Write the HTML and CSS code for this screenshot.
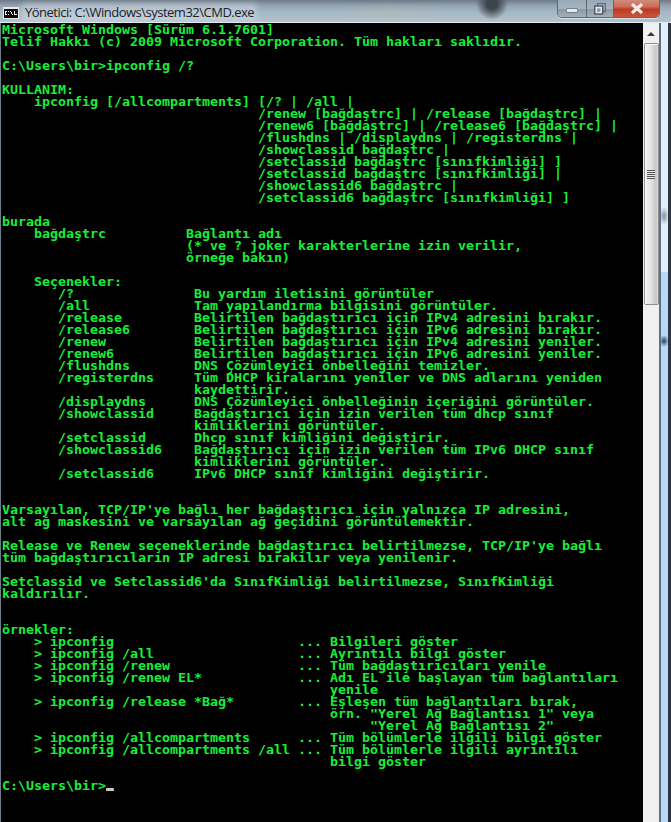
FILE: index.html
```html
<!DOCTYPE html>
<html lang="tr">
<head>
<meta charset="utf-8">
<title>CMD</title>
<link rel="stylesheet" href="styles.css">
</head>
<body>
<div class="window">
  <header class="titlebar">
    <svg class="appicon" width="16" height="12" viewBox="0 0 16 12"><rect width="16" height="12" fill="#e8e8e8"/><rect x="1" y="2" width="14" height="9" fill="#0a0a0a"/><path d="M2 4h2v1H3v2h1v1H2zM5 4h1v1H5zM5 7h1v1H5zM7 4h1v1h1v2h1v1H9V7H8V5H7zM11 4h1v3h2v1h-3z" fill="#f2f2f2"/></svg>
    <span class="title">Yönetici: C:\Windows\system32\CMD.exe</span>
    <div class="controls">
      <div class="btn min"><span class="dash"></span></div>
      <div class="btn max"><svg width="12" height="12" viewBox="0 0 12 12"><rect x="3.5" y="0.5" width="8" height="8" fill="none" stroke="#5f6d78" stroke-width="1.4"/><rect x="0.7" y="3" width="8" height="8" fill="#dfe5ea" stroke="#4e5a64" stroke-width="1.4"/><rect x="3" y="5.4" width="3.4" height="3.4" fill="#8d9aa5"/></svg></div>
      <div class="btn close"><svg width="16" height="11" viewBox="0 0 16 11"><path d="M3 1l10 9M13 1L3 10" stroke="#f1ece8" stroke-width="3.2"/></svg></div>
    </div>
  </header>
  <main class="content">
    <div class="console"><pre class="lines">Microsoft Windows [Sürüm 6.1.7601]
Telif Hakkı (c) 2009 Microsoft Corporation. Tüm hakları saklıdır.

C:\Users\bir&gt;ipconfig /?

KULLANIM:
    ipconfig [/allcompartments] [/? | /all |
                                /renew [bağdaştrc] | /release [bağdaştrc] |
                                /renew6 [bağdaştrc] | /release6 [bağdaştrc] |
                                /flushdns | /displaydns | /registerdns |
                                /showclassid bağdaştrc |
                                /setclassid bağdaştrc [sınıfkimliği] ]
                                /setclassid bağdaştrc [sınıfkimliği] |
                                /showclassid6 bağdaştrc |
                                /setclassid6 bağdaştrc [sınıfkimliği] ]

burada
    bağdaştrc          Bağlantı adı
                       (* ve ? joker karakterlerine izin verilir,
                       örneğe bakın)

    Seçenekler:
       /?               Bu yardım iletisini görüntüler
       /all             Tam yapılandırma bilgisini görüntüler.
       /release         Belirtilen bağdaştırıcı için IPv4 adresini bırakır.
       /release6        Belirtilen bağdaştırıcı için IPv6 adresini bırakır.
       /renew           Belirtilen bağdaştırıcı için IPv4 adresini yeniler.
       /renew6          Belirtilen bağdaştırıcı için IPv6 adresini yeniler.
       /flushdns        DNS Çözümleyici önbelleğini temizler.
       /registerdns     Tüm DHCP kiralarını yeniler ve DNS adlarını yeniden
                        kaydettirir.
       /displaydns      DNS Çözümleyici önbelleğinin içeriğini görüntüler.
       /showclassid     Bağdaştırıcı için izin verilen tüm dhcp sınıf
                        kimliklerini görüntüler.
       /setclassid      Dhcp sınıf kimliğini değiştirir.
       /showclassid6    Bağdaştırıcı için izin verilen tüm IPv6 DHCP sınıf
                        kimliklerini görüntüler.
       /setclassid6     IPv6 DHCP sınıf kimliğini değiştirir.


Varsayılan, TCP/IP'ye bağlı her bağdaştırıcı için yalnızca IP adresini,
alt ağ maskesini ve varsayılan ağ geçidini görüntülemektir.

Release ve Renew seçeneklerinde bağdaştırıcı belirtilmezse, TCP/IP'ye bağlı
tüm bağdaştırıcıların IP adresi bırakılır veya yenilenir.

Setclassid ve Setclassid6'da SınıfKimliği belirtilmezse, SınıfKimliği
kaldırılır.


örnekler:
    &gt; ipconfig                       ... Bilgileri göster
    &gt; ipconfig /all                  ... Ayrıntılı bilgi göster
    &gt; ipconfig /renew                ... Tüm bağdaştırıcıları yenile
    &gt; ipconfig /renew EL*            ... Adı EL ile başlayan tüm bağlantıları
                                         yenile
    &gt; ipconfig /release *Bağ*        ... Eşleşen tüm bağlantıları bırak,
                                         örn. "Yerel Ağ Bağlantısı 1" veya
                                              "Yerel Ağ Bağlantısı 2"
    &gt; ipconfig /allcompartments      ... Tüm bölümlerle ilgili bilgi göster
    &gt; ipconfig /allcompartments /all ... Tüm bölümlerle ilgili ayrıntılı
                                         bilgi göster

C:\Users\bir&gt;<span class="cursor"></span></pre></div>
    <aside class="scrollbar">
      <div class="arrow"></div>
      <div class="thumb"><span class="grip"></span></div>
    </aside>
    <div class="frame"></div>
  </main>
</div>
</body>
</html>
```
FILE: styles.css
```css
* { box-sizing: border-box; }
html, body { margin: 0; padding: 0; height: 100%; background: #000; overflow: hidden; }
.window {
  width: 671px;
  height: 822px;
  display: flex;
  flex-direction: column;
  background: #000;
}
.titlebar {
  height: 23px;
  flex: none;
  display: flex;
  align-items: center;
  padding-left: 3px;
  background:
    radial-gradient(circle at 492px 4px, #3c444c 0, #3c444c 5px, rgba(60,68,76,0) 16px),
    radial-gradient(ellipse 60px 12px at 390px 15px, rgba(180,190,170,.4), rgba(180,190,170,0)),
    linear-gradient(to bottom, #6f7a85 0, #94a6b5 6px, #a5b6c4 12px, #b3c3d0 22px);
  box-shadow: inset 0 -1px 0 #e4ebf0;
}
.appicon { flex: none; margin-right: 6px; margin-top: 2px; }
.title {
  font: 13px/1 "Open Sans", "Noto Sans", sans-serif;
  letter-spacing: -0.5px;
  color: #1b2126;
  background: rgba(215,225,232,.45);
  box-shadow: 0 0 6px 3px rgba(215,225,232,.45);
  flex: none;
  margin-top: 2px;
}
.controls {
  margin-left: auto;
  margin-right: 11px;
  align-self: flex-start;
  height: 18px;
  width: 103px;
  display: flex;
  border: 1px solid #5c6872;
  border-top: 0;
  border-radius: 0 0 5px 5px;
  overflow: hidden;
  box-shadow: 0 1px 0 rgba(235,240,245,.7);
}
.btn { height: 100%; display: flex; align-items: center; justify-content: center; }
.min, .max {
  background: linear-gradient(to bottom, #9aa9b6, #a5b4c0 50%, #8b98a3 52%, #a3afb9);
  border-right: 1px solid #5c6872;
}
.min { width: 29px; }
.max { width: 27px; }
.dash { width: 12px; height: 5px; background: #e4e9ed; border: 1px solid #75818b; border-radius: 1px; margin-top: 3px; }
.close {
  flex: 1;
  background: linear-gradient(to bottom, #d08c7c, #cc6a55 40%, #bb3a26 55%, #c8553c);
}
.content {
  flex: 1;
  min-height: 0;
  display: flex;
}
.console {
  flex: 1;
  min-width: 0;
  padding: 1px 0 0 2px;
  background: #000;
  overflow: hidden;
  box-shadow: inset 1px 0 0 #6c7c88;
}
.lines {
  margin: 0;
  color: #17ee3a;
  font-family: "DejaVu Sans Mono", monospace;
  font-weight: 700;
  font-size: 12px;
  line-height: 12px;
  white-space: pre;
  transform: scaleX(1.1074);
  transform-origin: 0 0;
}
.cursor {
  display: inline-block;
  width: 7px;
  height: 3px;
  background: #c8c8c8;
  vertical-align: -1px;
}
.scrollbar {
  width: 16px;
  flex: none;
  background: #f0f0f0;
  display: flex;
  flex-direction: column;
  align-items: center;
}
.arrow {
  margin-top: 9px;
  width: 0;
  height: 0;
  border-left: 4px solid transparent;
  border-right: 4px solid transparent;
  border-bottom: 4px solid #3a3a3a;
}
.thumb {
  margin-top: 7px;
  width: 15px;
  height: 262px;
  border: 1px solid #8f8f8f;
  border-radius: 2px;
  background: linear-gradient(to right, #f2f2f2, #e6e6e6 40%, #c6c6c6 85%, #dcdcdc);
  box-shadow: inset 1px 1px 0 #fbfbfb;
  display: flex;
  align-items: center;
  justify-content: center;
}
.grip {
  width: 8px;
  height: 9px;
  background: repeating-linear-gradient(to bottom, #555 0, #555 1px, #e8e8e8 1px, #e8e8e8 2px);
}
.frame {
  width: 12px;
  flex: none;
  background:
    radial-gradient(ellipse 5px 9px at 3px 193px, #8d9094, rgba(141,144,148,0)),
    radial-gradient(ellipse 5px 6px at 3px 318px, #28406e, rgba(40,64,110,0)),
    linear-gradient(to bottom, #e3effa 0, #e3effa 249px, #b9d8f5 249px);
  border-left: 2px solid #5b7086;
  border-right: 3px solid #2b3642;
}
```
